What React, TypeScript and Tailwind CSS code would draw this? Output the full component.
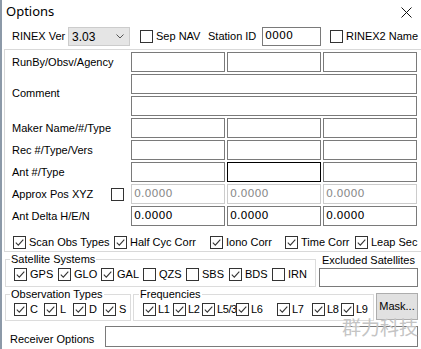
import React from 'react';

const labelFont = { fontFamily: '"Liberation Sans", Arial, sans-serif' };

const Check: React.FC<{ checked?: boolean }> = ({ checked }) => (
  <span className="w-[13px] h-[13px] border border-[#333] bg-white flex items-center justify-center shrink-0">
    {checked && (
      <svg width="11" height="11" viewBox="0 0 11 11">
        <path d="M1.8 5.6 L4.3 8.1 L9.3 2.6" stroke="#333" strokeWidth="1.1" fill="none" />
      </svg>
    )}
  </span>
);

const CheckItem: React.FC<{ label: string; checked?: boolean; w: string; tight?: boolean }> = ({ label, checked, w, tight }) => (
  <div className={`flex items-center h-[13px] shrink-0 ${tight ? 'gap-[2px]' : 'gap-[3px]'} ${w}`}>
    <Check checked={checked} />
    <span className={`text-[11px] leading-[13px] whitespace-nowrap ${tight ? 'tracking-[-0.4px]' : ''}`}>{label}</span>
  </div>
);

const Field: React.FC<{ w: string; value?: string; dim?: boolean; focus?: boolean }> = ({ w, value, dim, focus }) => (
  <div
    className={`h-[20px] shrink-0 bg-white border flex items-center pl-[2px] text-[11px] ${w} ${
      focus ? 'border-[#000]' : dim ? 'border-[#cccccc] text-[#8a8a8a]' : 'border-[#7a7a7a] text-black'
    }`}
    style={{ fontFamily: '"DejaVu Sans", Verdana, sans-serif' }}
  >
    {value}
  </div>
);

const ThreeFields: React.FC<{ values?: string[]; dim?: boolean; focusIdx?: number }> = ({ values, dim, focusIdx }) => (
  <div className="flex gap-[2px]">
    {[0, 1, 2].map((i) => (
      <Field key={i} w="w-[94px]" value={values?.[i]} dim={dim} focus={focusIdx === i} />
    ))}
  </div>
);

const Row: React.FC<{ label: string; children: React.ReactNode; extra?: React.ReactNode }> = ({ label, children, extra }) => (
  <div className="flex items-center h-[20px] mb-[2px] pl-[7px] shrink-0">
    <div className="w-[119px] shrink-0 flex items-center justify-between pr-[7px]">
      <span className="text-[11px] whitespace-nowrap">{label}</span>
      {extra}
    </div>
    {children}
  </div>
);

export default function App() {
  return (
    <div
      className="w-[421px] h-[349px] bg-white overflow-hidden relative flex flex-col border-l-2 border-[#8c99a8] text-black"
      style={labelFont}
    >
      {/* title bar */}
      <div className="h-[24px] shrink-0 flex items-center justify-between pl-[4px] pr-[8px]">
        <span className="text-[13px]" style={{ fontFamily: '"Noto Sans", sans-serif' }}>
          Options
        </span>
        <svg width="11" height="11" viewBox="0 0 11 11" className="mr-[1px]">
          <path d="M0.5 0.5 L10.5 10.5 M10.5 0.5 L0.5 10.5" stroke="#111" strokeWidth="1" />
        </svg>
      </div>

      {/* top row */}
      <div className="h-[19px] shrink-0 mt-[3px] flex items-center">
        <span className="ml-[10px] w-[56px] text-[11px] whitespace-nowrap">RINEX Ver</span>
        <div className="w-[62px] h-[19px] bg-[#e5e5e5] border border-[#cccccc] flex items-center justify-between pl-[3px] pr-[5px]">
          <span className="text-[12px]">3.03</span>
          <svg width="8" height="5" viewBox="0 0 8 5">
            <path d="M0.5 0.5 L4 4 L7.5 0.5" stroke="#555" fill="none" />
          </svg>
        </div>
        <div className="ml-[10px] w-[68px]">
          <CheckItem label="Sep NAV" w="" />
        </div>
        <span className="w-[54px] text-[11px] whitespace-nowrap">Station ID</span>
        <Field w="w-[59px] !h-[19px]" value="0000" />
        <div className="ml-[9px]">
          <CheckItem label="RINEX2 Name" w="" />
        </div>
      </div>

      {/* main panel */}
      <div className="mt-[3px] ml-[2px] shrink-0 border-t border-l border-b border-[#d9d9d9] pt-[2px] flex flex-col">
        <Row label="RunBy/Obsv/Agency">
          <ThreeFields />
        </Row>
        <div className="flex pl-[7px] mb-[2px] shrink-0">
          <div className="w-[119px] shrink-0 flex items-center pb-[4px]">
            <span className="text-[11px]">Comment</span>
          </div>
          <div className="flex flex-col gap-[2px]">
            <Field w="w-[286px]" />
            <Field w="w-[286px]" />
          </div>
        </div>
        <Row label="Maker Name/#/Type">
          <ThreeFields />
        </Row>
        <Row label="Rec #/Type/Vers">
          <ThreeFields />
        </Row>
        <Row label="Ant #/Type">
          <ThreeFields focusIdx={1} />
        </Row>
        <Row label="Approx Pos XYZ" extra={<Check />}>
          <ThreeFields values={['0.0000', '0.0000', '0.0000']} dim />
        </Row>
        <Row label="Ant Delta H/E/N">
          <ThreeFields values={['0.0000', '0.0000', '0.0000']} />
        </Row>
        <div className="h-[18px] shrink-0 mt-[5px] flex items-start pt-[3px] pl-[8px]">
          <CheckItem label="Scan Obs Types" checked w="w-[101px]" />
          <CheckItem label="Half Cyc Corr" checked w="w-[96px]" />
          <CheckItem label="Iono Corr" checked w="w-[75px]" />
          <CheckItem label="Time Corr" checked w="w-[70px]" />
          <CheckItem label="Leap Sec" checked w="w-[62px]" />
        </div>
      </div>

      {/* satellite systems + excluded */}
      <div className="flex shrink-0">
        <fieldset className="ml-[3px] w-[311px] border border-[#dcdcdc] pb-[4px]">
          <legend className="ml-[4px] text-[11px] leading-[14px] px-[1px]">Satellite Systems</legend>
          <div className="flex pt-[2px] pl-[8px]">
            <CheckItem label="GPS" checked w="w-[44px]" />
            <CheckItem label="GLO" checked w="w-[43px]" />
            <CheckItem label="GAL" checked w="w-[42px]" />
            <CheckItem label="QZS" w="w-[43px]" />
            <CheckItem label="SBS" w="w-[43px]" />
            <CheckItem label="BDS" checked w="w-[43px]" />
            <CheckItem label="IRN" w="w-[40px]" />
          </div>
        </fieldset>
        <div className="ml-[3px] w-[99px] flex flex-col items-center">
          <span className="text-[11px] leading-[14px] mt-[1px] whitespace-nowrap">Excluded Satellites</span>
          <Field w="w-[99px] mt-[1px] !h-[19px]" />
        </div>
      </div>

      {/* observation types, frequencies, mask */}
      <div className="flex items-start shrink-0">
        <fieldset className="ml-[3px] w-[126px] border border-[#dcdcdc] pb-[4px]">
          <legend className="ml-[4px] text-[11px] leading-[14px] px-[1px]">Observation Types</legend>
          <div className="flex pt-[2px] pl-[8px]">
            <CheckItem label="C" checked w="w-[30px]" />
            <CheckItem label="L" checked w="w-[29px]" />
            <CheckItem label="D" checked w="w-[30px]" />
            <CheckItem label="S" checked w="w-[20px]" />
          </div>
        </fieldset>
        <fieldset className="ml-[2px] w-[241px] border border-[#dcdcdc] pb-[4px]">
          <legend className="ml-[5px] text-[11px] leading-[14px] px-[1px]">Frequencies</legend>
          <div className="flex pt-[2px] pl-[9px]">
            <CheckItem label="L1" checked tight w="w-[30px]" />
            <CheckItem label="L2" checked tight w="w-[29px]" />
            <CheckItem label="L5/3" checked tight w="w-[34px]" />
            <CheckItem label="L6" checked tight w="w-[41px]" />
            <CheckItem label="L7" checked tight w="w-[35px]" />
            <CheckItem label="L8" checked tight w="w-[29px]" />
            <CheckItem label="L9" checked tight w="w-[28px]" />
          </div>
        </fieldset>
        <button className="ml-[2px] mt-[6px] w-[42px] h-[27px] bg-[#e1e1e1] border border-[#adadad] text-[11px] flex items-center justify-center whitespace-nowrap">
          Mask...
        </button>
      </div>

      {/* receiver options */}
      <div className="mt-[4px] shrink-0 flex items-center">
        <span className="ml-[8px] w-[95px] text-[11px] pt-[6px] whitespace-nowrap">Receiver Options</span>
        <Field w="w-[313px] !h-[21px]" />
      </div>

      {/* dialog buttons, only their top edges show */}
      <div className="mt-[2px] shrink-0 flex">
        <div className="ml-[258px] w-[79px] h-[23px] bg-[#e1e1e1] border-2 border-[#0078d7]" />
        <div className="ml-[5px] w-[77px] h-[23px] bg-[#e1e1e1] border border-[#adadad]" />
      </div>

      {/* watermark */}
      <span
        className="absolute left-[340px] top-[317px] text-[19px] leading-[20px] text-[#c4c4c4] whitespace-nowrap pointer-events-none"
        style={{ fontFamily: '"Noto Sans CJK SC", sans-serif' }}
      >
        群力科技
      </span>
    </div>
  );
}
